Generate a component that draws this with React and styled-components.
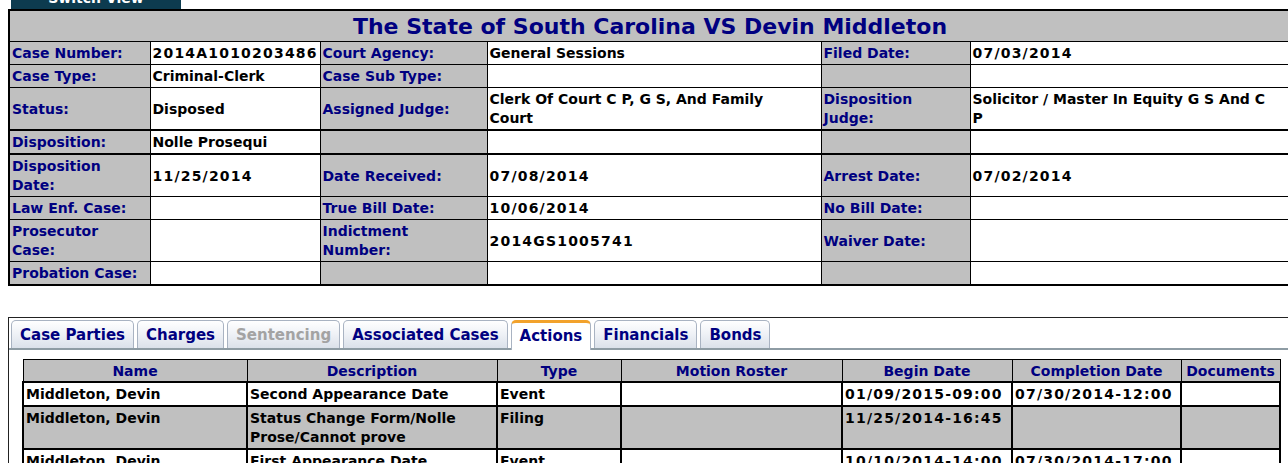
import React from 'react';
import styled, { createGlobalStyle } from 'styled-components';

const GlobalStyle = createGlobalStyle`
  html, body {
    margin: 0;
    padding: 0;
    background: #ffffff;
    overflow: hidden;
  }
  body {
    font-family: "DejaVu Sans", Verdana, sans-serif;
  }
`;

const Page = styled.div`
  width: 1290px;
  padding-left: 8px;
  font-family: "DejaVu Sans", Verdana, sans-serif;
  font-weight: bold;
`;

const SwitchButton = styled.div`
  width: 170px;
  height: 24px;
  margin: -15px 0 0 3px;
  background: #0d3b4f;
  color: #ffffff;
  font-size: 14px;
  line-height: 27px;
  text-align: center;
  overflow: hidden;
`;

const CaseTable = styled.table`
  width: 1282px;
  table-layout: fixed;
  border-collapse: collapse;
  border: 2px solid #000;
  font-size: 14px;
`;

const Col = styled.col`
  width: ${(p) => p.$w}px;
`;

const Title = styled.th`
  height: 30px;
  padding: 0;
  background: #c0c0c0;
  color: #000080;
  font-size: 22px;
  text-align: center;
  vertical-align: middle;
  border: 1px solid #000;
`;

const Row = styled.tr`
  & > td {
    border-bottom-width: ${(p) => (p.$thick ? '2px' : '1px')};
  }
`;

const Label = styled.td`
  background: #c0c0c0;
  color: #000080;
  padding: 2px 2px 1px 2px;
  line-height: 19px;
  white-space: nowrap;
  vertical-align: middle;
  border: 1px solid #000;
  overflow: hidden;
`;

const Value = styled.td`
  background: #ffffff;
  color: #000;
  padding: 2px 2px 1px 2px;
  line-height: 19px;
  vertical-align: middle;
  white-space: nowrap;
  letter-spacing: ${(p) => (p.$num ? '1.2px' : '0')};
  border: 1px solid #000;
  overflow: hidden;
`;

const TabsBox = styled.div`
  margin-top: 31px;
  border-top: 1px solid #222;
  border-left: 1px solid #222;
`;

const TabStrip = styled.div`
  display: flex;
  gap: 3px;
  padding: 2px 0 0 2px;
  height: 28px;
  border-bottom: 2px solid #8e9ca4;
`;

const Tab = styled.div`
  box-sizing: border-box;
  height: ${(p) => (p.$active ? '30px' : '28px')};
  padding: 0 8px;
  border: 1px solid #a9b3c2;
  border-bottom: none;
  border-top: ${(p) => (p.$active ? '3px solid #f2a22c' : '1px solid #a9b3c2')};
  border-radius: 5px 5px 0 0;
  background: ${(p) =>
    p.$active ? '#ffffff' : 'linear-gradient(#ffffff 0%, #eef1f6 50%, #dbe1ea 100%)'};
  color: ${(p) => (p.$disabled ? '#a3a3a3' : '#000080')};
  font-size: 15px;
  line-height: ${(p) => (p.$active ? '26px' : '28px')};
  white-space: nowrap;
  position: relative;
  z-index: 1;
`;

const Panel = styled.div`
  padding: 9px 0 0 13px;
`;

const ActionTable = styled.table`
  width: 1257px;
  table-layout: fixed;
  border-collapse: collapse;
  font-size: 14px;
`;

const Head = styled.th`
  background: #c0c0c0;
  color: #000080;
  text-align: center;
  padding: 2px 2px 0 2px;
  line-height: 19px;
  border: 1px solid #000;
  border-bottom-width: 2px;
  white-space: nowrap;
`;

const Cell = styled.td`
  background: ${(p) => (p.$shade ? '#c0c0c0' : '#ffffff')};
  color: #000;
  padding: 2px 2px 1px 2px;
  line-height: 19px;
  vertical-align: top;
  border: 2px solid #000;
  letter-spacing: ${(p) => (p.$num ? '1.2px' : '0')};
  white-space: nowrap;
  overflow: hidden;
`;

const caseCols = [141, 170, 167, 334, 149, 321];
const actionCols = [224, 250, 124, 221, 170, 169, 99];

const caseRows = [
  { cells: [['Case Number:'], ['2014A1010203486', 1], ['Court Agency:'], ['General Sessions'], ['Filed Date:'], ['07/03/2014', 1]] },
  { cells: [['Case Type:'], ['Criminal-Clerk'], ['Case Sub Type:'], [''], [''], ['']] },
  {
    thick: true,
    cells: [['Status:'], ['Disposed'], ['Assigned Judge:'], [['Clerk Of Court C P, G S, And Family', 'Court']], [['Disposition', 'Judge:']], [['Solicitor / Master In Equity G S And C', 'P']]],
  },
  { thick: true, cells: [['Disposition:'], ['Nolle Prosequi'], [''], [''], [''], ['']] },
  { cells: [[['Disposition', 'Date:']], ['11/25/2014', 1], ['Date Received:'], ['07/08/2014', 1], ['Arrest Date:'], ['07/02/2014', 1]] },
  { cells: [['Law Enf. Case:'], [''], ['True Bill Date:'], ['10/06/2014', 1], ['No Bill Date:'], ['']] },
  { cells: [[['Prosecutor', 'Case:']], [''], [['Indictment', 'Number:']], ['2014GS1005741', 1], ['Waiver Date:'], ['']] },
  { cells: [['Probation Case:'], [''], [''], [''], [''], ['']] },
];

const tabs = [
  { name: 'Case Parties' },
  { name: 'Charges' },
  { name: 'Sentencing', disabled: true },
  { name: 'Associated Cases' },
  { name: 'Actions', active: true },
  { name: 'Financials' },
  { name: 'Bonds' },
];

const headers = ['Name', 'Description', 'Type', 'Motion Roster', 'Begin Date', 'Completion Date', 'Documents'];

const actions = [
  ['Middleton, Devin', 'Second Appearance Date', 'Event', '', '01/09/2015-09:00', '07/30/2014-12:00', ''],
  ['Middleton, Devin', ['Status Change Form/Nolle', 'Prose/Cannot prove'], 'Filing', '', '11/25/2014-16:45', '', ''],
  ['Middleton, Devin', 'First Appearance Date', 'Event', '', '10/10/2014-14:00', '07/30/2014-17:00', ''],
  ['Middleton, Devin', 'Bond Hearing', 'Event', '', '07/02/2014-09:00', '07/02/2014-10:00', ''],
];

const Lines = ({ text }) =>
  Array.isArray(text)
    ? text.map((t, i) => (
        <React.Fragment key={i}>
          {i > 0 && <br />}
          {t}
        </React.Fragment>
      ))
    : text;

const App = () => {
  return (
    <Page>
      <GlobalStyle />
      <SwitchButton>Switch View</SwitchButton>
      <CaseTable>
        <colgroup>
          {caseCols.map((w, i) => (
            <Col key={i} $w={w} />
          ))}
        </colgroup>
        <thead>
          <tr>
            <Title colSpan={6}>The State of South Carolina VS Devin Middleton</Title>
          </tr>
        </thead>
        <tbody>
          {caseRows.map((row, r) => (
            <Row key={r} $thick={row.thick}>
              {row.cells.map(([text, num], c) =>
                c % 2 === 0 ? (
                  <Label key={c}>
                    <Lines text={text} />
                  </Label>
                ) : (
                  <Value key={c} $num={num}>
                    <Lines text={text} />
                  </Value>
                )
              )}
            </Row>
          ))}
        </tbody>
      </CaseTable>

      <TabsBox>
        <TabStrip>
          {tabs.map((t) => (
            <Tab key={t.name} $active={t.active} $disabled={t.disabled}>
              {t.name}
            </Tab>
          ))}
        </TabStrip>
        <Panel>
          <ActionTable>
            <colgroup>
              {actionCols.map((w, i) => (
                <Col key={i} $w={w} />
              ))}
            </colgroup>
            <thead>
              <tr>
                {headers.map((h) => (
                  <Head key={h}>{h}</Head>
                ))}
              </tr>
            </thead>
            <tbody>
              {actions.map((row, r) => (
                <tr key={r}>
                  {row.map((text, c) => (
                    <Cell key={c} $shade={r % 2 === 1} $num={c === 4 || c === 5}>
                      <Lines text={text} />
                    </Cell>
                  ))}
                </tr>
              ))}
            </tbody>
          </ActionTable>
        </Panel>
      </TabsBox>
    </Page>
  );
};

export default App;
